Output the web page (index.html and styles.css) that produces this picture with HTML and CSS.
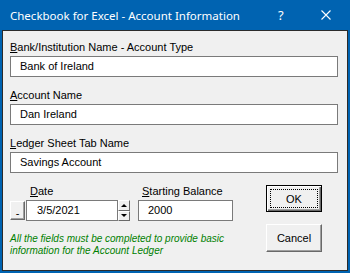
FILE: index.html
```html
<!DOCTYPE html>
<html lang="en">
<head>
  <meta charset="UTF-8" />
  <title>Checkbook for Excel - Account Information</title>
  <link rel="stylesheet" href="styles.css">
</head>
<body>
  <div class="window">
    <div class="title-bar">
      <div class="title">Checkbook for Excel - Account Information</div>
      <div class="title-help">?</div>
      <div class="title-close">
        <svg width="10" height="10" viewBox="0 0 10 10">
          <path d="M0.5 0.5 L9.5 9.5 M9.5 0.5 L0.5 9.5" stroke="#fff" stroke-width="1.1" fill="none"/>
        </svg>
      </div>
    </div>

    <div class="client">
      <div class="field">
        <label><u>B</u>ank/Institution Name - Account Type</label>
        <div class="textbox">Bank of Ireland</div>
      </div>

      <div class="field">
        <label><u>A</u>ccount Name</label>
        <div class="textbox">Dan Ireland</div>
      </div>

      <div class="field">
        <label><u>L</u>edger Sheet Tab Name</label>
        <div class="textbox">Savings Account</div>
      </div>

      <div class="bottom">
        <div class="bottom-left">
          <div class="small-fields">
            <div class="date-field">
              <label class="date-label"><u>D</u>ate</label>
              <div class="date-row">
                <div class="dash-btn">-</div>
                <div class="textbox date-box">3/5/2021</div>
                <div class="spin">
                  <div class="spin-btn"><span class="arrow-up"></span></div>
                  <div class="spin-btn"><span class="arrow-down"></span></div>
                </div>
              </div>
            </div>
            <div class="balance-field">
              <label class="balance-label"><u>S</u>tarting Balance</label>
              <div class="textbox balance-box">2000</div>
            </div>
          </div>
          <div class="note">
            All the fields must be completed to provide basic<br>
            information for the Account Ledger
          </div>
        </div>

        <div class="buttons">
          <div class="btn btn-default"><span class="focus">OK</span></div>
          <div class="btn">Cancel</div>
        </div>
      </div>
    </div>
  </div>
</body>
</html>
```

FILE: styles.css
```css
html, body {
  margin: 0;
  padding: 0;
  background: #ffffff;
}

.window {
  width: 350px;
  height: 273px;
  box-sizing: border-box;
  background: #0063b1;
  padding: 0 2px 2px 2px;
  display: flex;
  flex-direction: column;
}

.title-bar {
  height: 30px;
  display: flex;
  align-items: center;
  color: #ffffff;
  font-family: 'Noto Sans', sans-serif;
  font-size: 11.5px;
}

.title {
  padding-left: 8px;
  flex: 1;
}

.title-help {
  width: 14px;
  margin-right: 29px;
  font-size: 13px;
}

.title-close {
  width: 10px;
  height: 10px;
  margin-right: 17px;
  display: flex;
}

.client {
  flex: 1;
  background: #f0f0f0;
  border: 1px solid #2b2b2b;
  padding: 10px 8px 0 7px;
  font-family: 'Liberation Sans', Arial, sans-serif;
  font-size: 11px;
  color: #000000;
}

label {
  display: block;
  line-height: 13px;
  height: 13px;
  margin-bottom: 2px;
}

u {
  text-decoration: underline;
  text-underline-offset: 1px;
}

.field {
  margin-bottom: 12px;
}

.textbox {
  box-sizing: border-box;
  height: 21px;
  width: 328px;
  background: #ffffff;
  border: 1px solid #7a7a7a;
  padding-left: 9px;
  line-height: 19px;
}

.bottom {
  display: flex;
  align-items: flex-start;
}

.bottom-left {
  width: 256px;
}

.small-fields {
  display: flex;
  gap: 8px;
}

.date-label {
  margin-left: 20px;
}

.balance-label {
  margin-left: 4px;
}

.date-row {
  display: flex;
}

.dash-btn {
  box-sizing: border-box;
  width: 15px;
  height: 19px;
  margin-top: 1px;
  margin-right: 1px;
  background: #f0f0f0;
  border-top: 1px solid #ffffff;
  border-left: 1px solid #ffffff;
  border-right: 1px solid #696969;
  border-bottom: 1px solid #696969;
  box-shadow: inset -1px -1px 0 #a0a0a0;
  text-align: center;
  line-height: 22px;
  font-size: 11px;
}

.date-box {
  width: 92px;
  padding-left: 10px;
}

.spin {
  display: flex;
  flex-direction: column;
  width: 12px;
  height: 21px;
}

.spin-btn {
  box-sizing: border-box;
  height: 10.5px;
  background: #f0f0f0;
  border-top: 1px solid #ffffff;
  border-left: 1px solid #ffffff;
  border-right: 1px solid #696969;
  border-bottom: 1px solid #696969;
  display: flex;
  align-items: center;
  justify-content: center;
}

.arrow-up {
  width: 0;
  height: 0;
  border-left: 3px solid transparent;
  border-right: 3px solid transparent;
  border-bottom: 3px solid #000000;
}

.arrow-down {
  width: 0;
  height: 0;
  border-left: 3px solid transparent;
  border-right: 3px solid transparent;
  border-top: 3px solid #000000;
}

.balance-box {
  width: 95px;
}

.note {
  margin-top: 12px;
  font-size: 10px;
  line-height: 12px;
  font-style: italic;
  color: #008000;
  white-space: nowrap;
}

.buttons {
  display: flex;
  flex-direction: column;
  gap: 12px;
}

.btn {
  box-sizing: border-box;
  width: 56px;
  height: 28px;
  background: #f0f0f0;
  border-top: 1px solid #ffffff;
  border-left: 1px solid #ffffff;
  border-right: 1px solid #696969;
  border-bottom: 1px solid #696969;
  box-shadow: inset -1px -1px 0 #a0a0a0;
  display: flex;
  align-items: center;
  justify-content: center;
  font-size: 11px;
}

.btn-default {
  height: 27px;
  border: 1px solid #000000;
  box-shadow: inset 1px 1px 0 #ffffff, inset -1px -1px 0 #696969, inset -2px -2px 0 #a0a0a0;
  padding: 3px;
}

.focus {
  box-sizing: border-box;
  width: 100%;
  height: 100%;
  border: 1px dotted #000000;
  display: flex;
  align-items: center;
  justify-content: center;
}
```
